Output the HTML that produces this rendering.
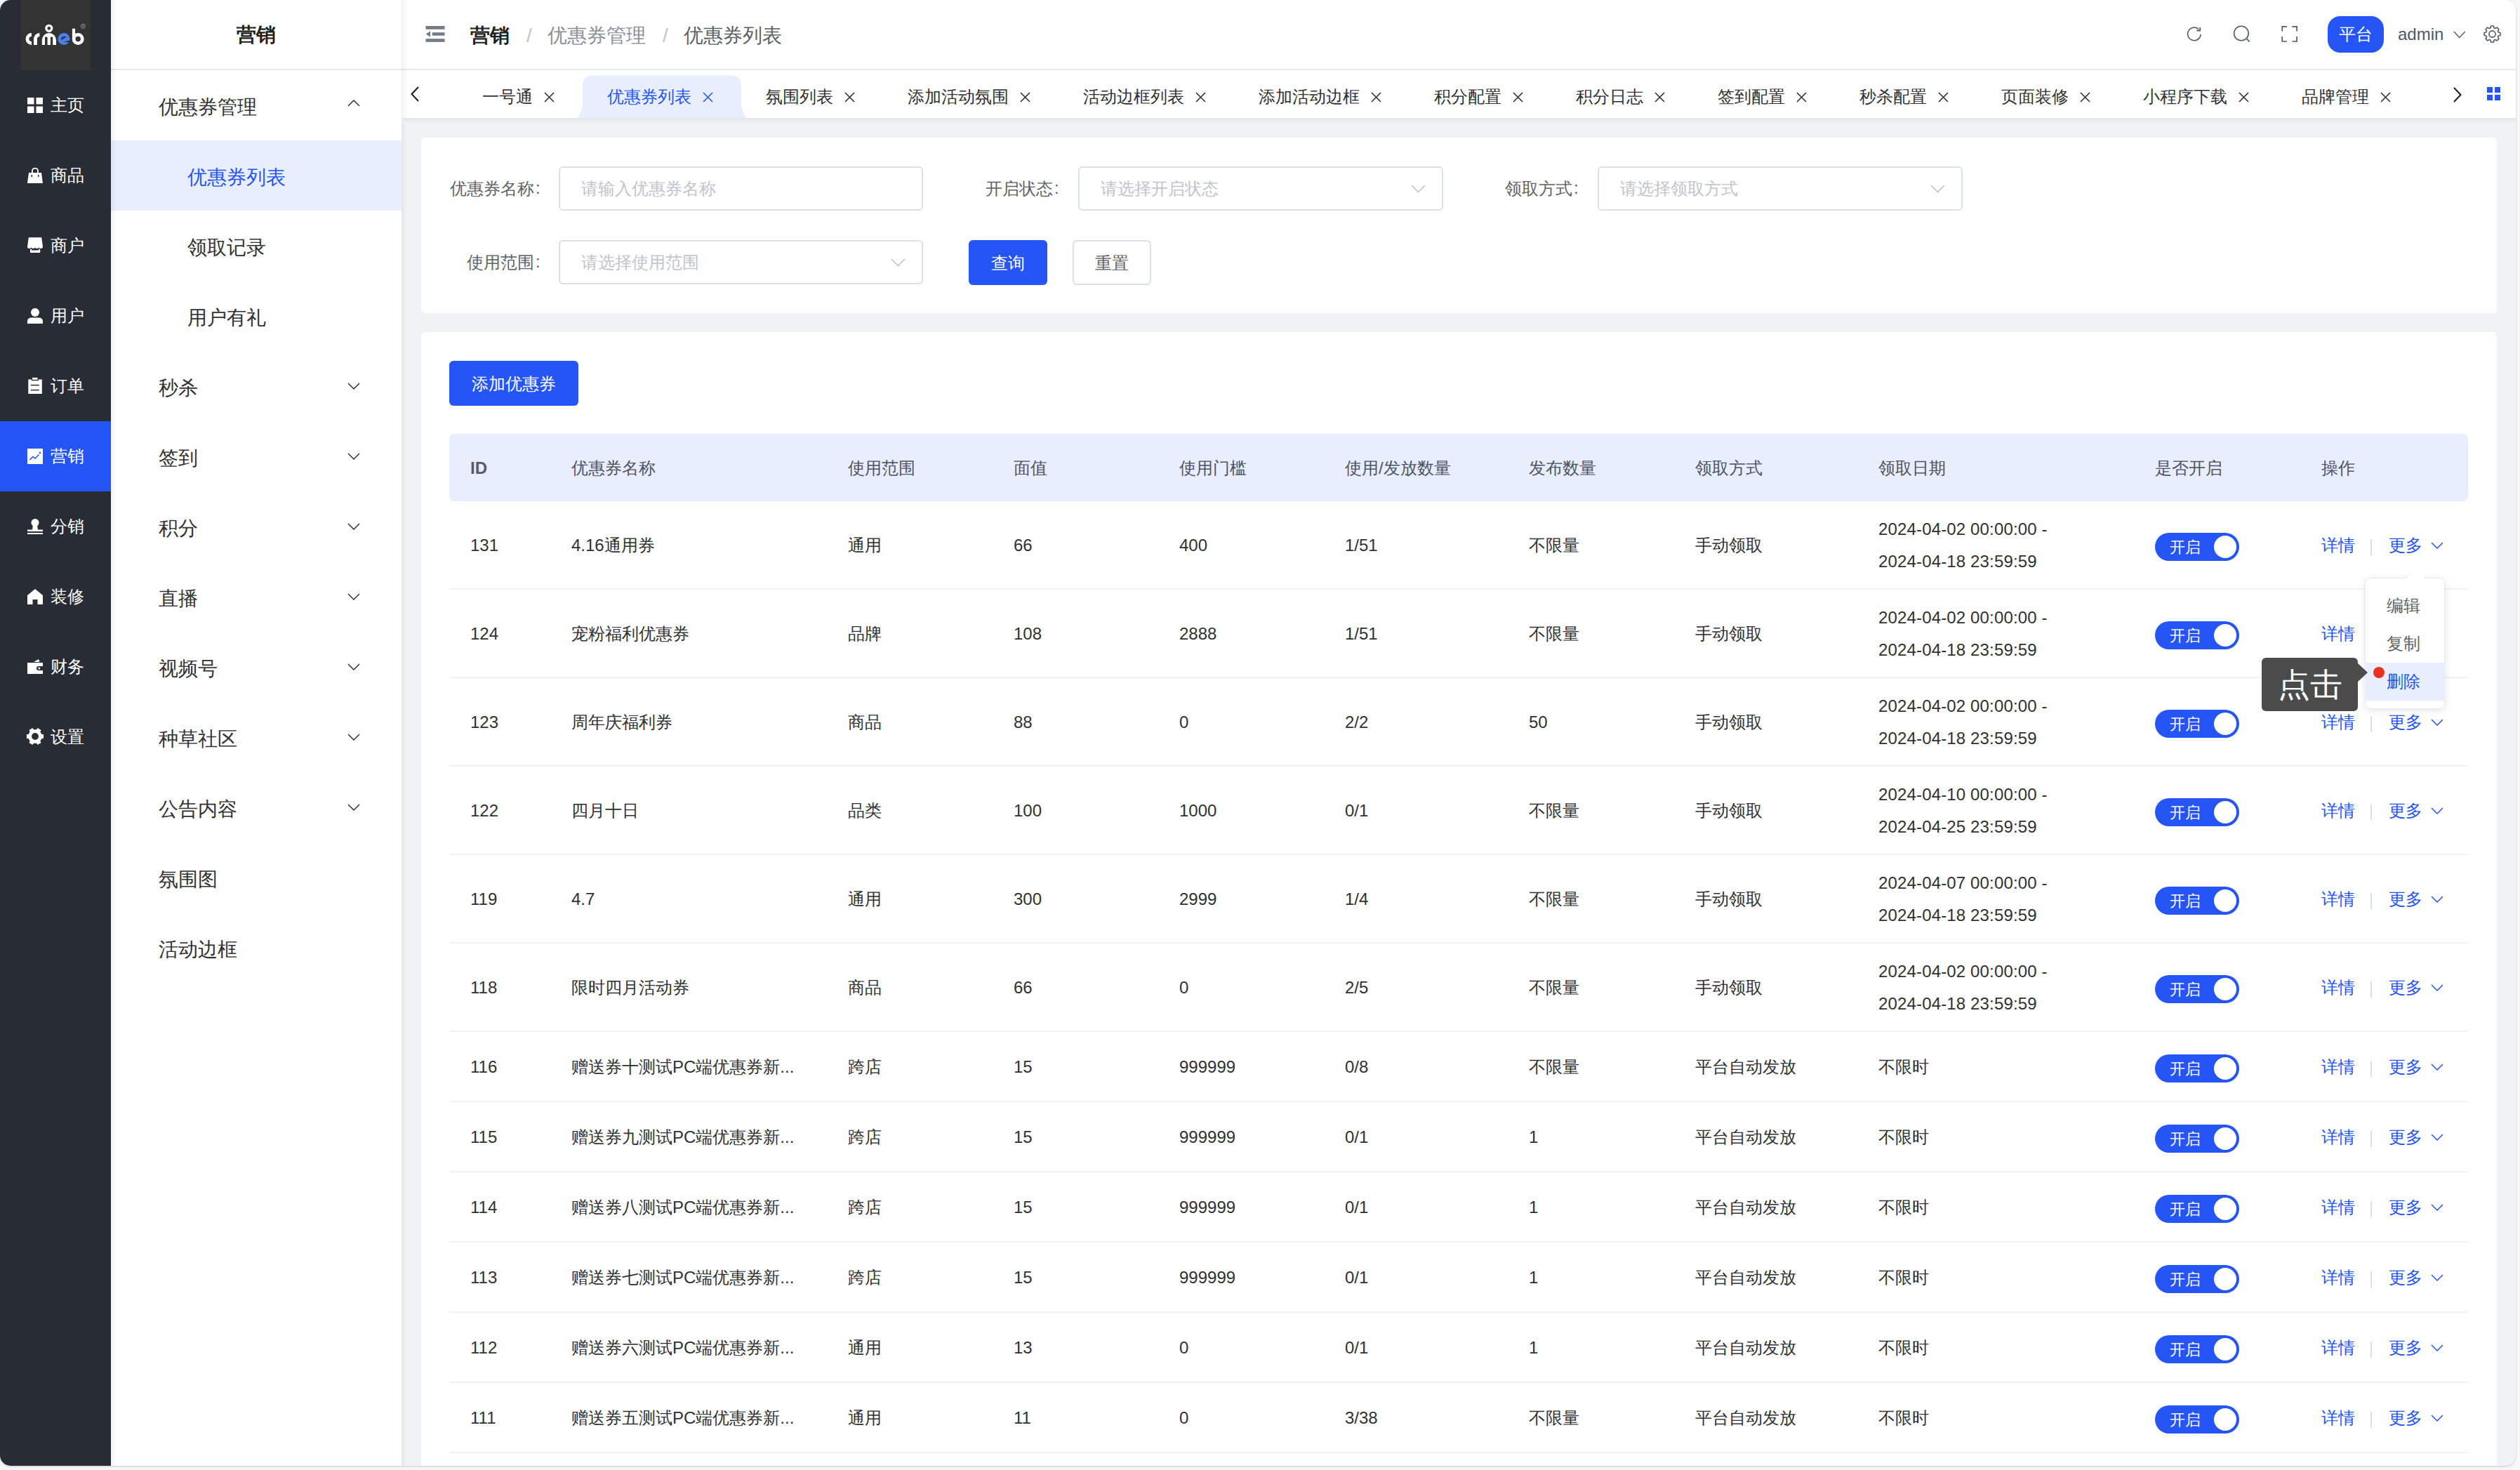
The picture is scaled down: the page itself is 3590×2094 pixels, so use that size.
<!DOCTYPE html>
<html><head><meta charset="utf-8"><title>优惠券列表</title>
<style>
*{box-sizing:border-box;margin:0;padding:0}
svg{display:block}
html,body{width:3590px;height:2094px;overflow:hidden;background:#f7f7f7;font-family:"Liberation Sans",sans-serif;color:#303133}
.abs{position:absolute}
.win{position:absolute;left:0;top:0;width:3584px;height:2088px;border-radius:15px;overflow:hidden;background:#f0f2f5;box-shadow:0 1px 3px rgba(0,0,0,.18)}
.s1{position:absolute;left:0;top:0;width:158px;height:2088px;background:#282c35}
.logo{position:absolute;left:29px;top:0;width:100px;height:100px;background:#333}
.mi{position:absolute;left:0;width:158px;height:100px;color:#fff;font-size:24px;line-height:100px}
.mi .ic{position:absolute;left:39px;top:39px;width:22px;height:22px}
.mi .ic svg{display:block}
.mi .tx{position:absolute;left:72px;top:0}
.mi.on{background:#2555f5}
.s2{position:absolute;left:158px;top:0;width:414px;height:2088px;background:#fff}
.s2 .ttl{position:absolute;left:0;top:1px;width:414px;height:98px;line-height:98px;text-align:center;font-size:28px;font-weight:bold;color:#1f1f1f}
.s2 .sep{position:absolute;left:0;top:98px;width:414px;height:2px;background:#e6e8ef}
.gi{position:absolute;left:0;width:414px;height:100px;line-height:100px;font-size:28px;color:#303133}
.gi .tx{position:absolute;left:68px;top:3px}
.gi .ar{position:absolute;left:337px;top:45px;width:18px;height:10px;color:#303133}
.gi .ar svg{display:block}
.si{position:absolute;left:0;width:414px;height:100px;line-height:100px;font-size:28px;color:#303133}
.si .tx{position:absolute;left:109px;top:3px}
.si.on{background:#e8eefd;color:#2555f5}
.hdr{position:absolute;left:572px;top:0;width:3012px;height:98px;background:#fff}
.hsep{position:absolute;left:572px;top:98px;width:3012px;height:2px;background:#e6e8ef}
.tabs{position:absolute;left:572px;top:100px;width:3012px;height:68px;background:#fff}
.tab{position:absolute;top:0;height:68px;font-size:24px;color:#303133;line-height:76px}
.tab .x{position:absolute;top:31px;width:15px;height:15px}
.tab .x svg{display:block}
.card{position:absolute;background:#fff;border-radius:6px}
.lbl{position:absolute;font-size:24px;color:#606266;line-height:34px}
.inp{position:absolute;height:63px;border:2px solid #dcdfe6;border-radius:6px;background:#fff;font-size:24px;color:#c0c4cc;line-height:59px;padding-left:30px}
.inp .ar{position:absolute;right:23px;top:24px;color:#c0c4cc}
.inp .ar svg{display:block}
.btn{position:absolute;height:64px;border-radius:6px;font-size:24px;line-height:66px;text-align:center}
.th{position:absolute;left:640px;top:618px;width:2876px;height:96px;background:#e8eefd;border-radius:7px}
.thc{position:absolute;top:1px;line-height:96px;font-size:24px;font-weight:500;color:#4d5466}
.tr{position:absolute;left:640px;width:2876px;border-bottom:2px solid #f1f2f4}
.td{position:absolute;font-size:24px;color:#303133;white-space:nowrap}
.sw{position:absolute;width:120px;height:40px;border-radius:20px;background:#2555f5}
.sw .k{position:absolute;left:84px;top:4px;width:32px;height:32px;border-radius:50%;background:#fff}
.sw .t{position:absolute;left:21px;top:1px;line-height:40px;font-size:22px;font-weight:500;color:#fff}
.op{position:absolute;font-size:24px;color:#2555f5;white-space:nowrap}
</style></head><body>
<div class="win">

<div class="s1">
<div class="logo"></div><svg class="abs" style="left:0;top:0" width="158" height="100" viewBox="0 0 158 100"><path d="M45 49.45 A6.05 6.05 0 0 0 45 61.55" fill="none" stroke="#fff" stroke-width="4.9"/><path d="M50.45 64 V55.5 A6 6 0 0 1 56.4 49.45" fill="none" stroke="#fff" stroke-width="4.9"/><path d="M59.8 64 V57.2 A10.1 10.1 0 0 1 80 57.2 V64 Z" fill="#fff"/><path d="M64 64 V53.6 Q64 52.4 65.8 52.4 Q67.6 52.4 67.6 53.6 V64 Z M71.9 64 V53.6 Q71.9 52.4 73.55 52.4 Q75.2 52.4 75.2 53.6 V64 Z" fill="#333"/><circle cx="69.8" cy="40.3" r="4" fill="none" stroke="#fff" stroke-width="3.2"/><circle cx="91" cy="55.5" r="8.5" fill="#4a80f0"/><path d="M87.1 57.2 Q86.6 52.3 91.5 52.1 L95.6 52.3 Z" fill="#333"/><path d="M89.5 59.8 L99.6 57.6 L99.6 60.2 Z" fill="#333"/><path d="M86.5 60 L96.5 51 L98.5 53 L88.5 62 Z" fill="#4a80f0"/><path d="M105 40.7 V56" stroke="#fff" stroke-width="4.2"/><circle cx="111.2" cy="55.5" r="6.1" fill="none" stroke="#fff" stroke-width="4.8" transform="translate(-0 0)"/><circle cx="118.3" cy="37.4" r="3.2" fill="none" stroke="#bbb" stroke-width="0.6"/><path d="M117.3 39.3 V35.6 H118.7 Q119.8 35.6 119.8 36.6 Q119.8 37.5 118.7 37.5 H117.3 M118.6 37.5 L119.9 39.3" fill="none" stroke="#bbb" stroke-width="0.5"/></svg>
<div class="mi" style="top:100px"><span class="ic"><svg width="22" height="22" viewBox="0 0 22 22"><rect x="0" y="0" width="9.5" height="9.5" fill="#fff"/><rect x="12.5" y="0" width="9.5" height="9.5" fill="#fff"/><rect x="0" y="12.5" width="9.5" height="9.5" fill="#fff"/><rect x="12.5" y="12.5" width="9.5" height="9.5" fill="#fff"/></svg></span><span class="tx">主页</span></div>
<div class="mi" style="top:200px"><span class="ic"><svg width="22" height="22" viewBox="0 0 22 22"><path d="M2 7 H20 L22 22 H0 Z" fill="#fff"/><path d="M7 7 V4.5 A4 4 0 0 1 15 4.5 V7" fill="none" stroke="#fff" stroke-width="1.8"/><rect x="5.5" y="10" width="1.6" height="3" fill="#282c35"/><rect x="14.9" y="10" width="1.6" height="3" fill="#282c35"/></svg></span><span class="tx">商品</span></div>
<div class="mi" style="top:300px"><span class="ic"><svg width="22" height="22" viewBox="0 0 22 22" style="overflow:visible"><path d="M1.8 -0.8 H20.2 L22 12.6 Q22 15 19.25 15 Q16.5 15 16.5 12.8 Q16.5 15 13.75 15 Q11 15 11 12.8 Q11 15 8.25 15 Q5.5 15 5.5 12.8 Q5.5 15 2.75 15 Q0 15 0 12.6 Z" fill="#fff"/><path fill="#fff" fill-rule="evenodd" d="M4 15.8 H18.2 V21 H4 Z M6 15.8 H16.2 V17.6 H6 Z"/></svg></span><span class="tx">商户</span></div>
<div class="mi" style="top:400px"><span class="ic"><svg width="22" height="22" viewBox="0 0 22 22"><circle cx="11" cy="6" r="6" fill="#fff"/><path d="M0 22 V19 Q0 13.5 6 13.5 H16 Q22 13.5 22 19 V22 Z" fill="#fff"/></svg></span><span class="tx">用户</span></div>
<div class="mi" style="top:500px"><span class="ic"><svg width="22" height="24" viewBox="0 0 22 24" style="overflow:visible"><rect x="7" y="-1.1" width="7.6" height="3" fill="#fff"/><path d="M1.3 1.6 H5.9 V3.2 H15.9 V1.6 H20.8 V22 H1.3 Z" fill="#fff"/><rect x="5" y="8.9" width="11.8" height="1.5" fill="#282c35"/><rect x="5" y="15.9" width="11.8" height="1.5" fill="#282c35"/></svg></span><span class="tx">订单</span></div>
<div class="mi on" style="top:600px"><span class="ic"><svg width="22" height="22" viewBox="0 0 22 22"><rect x="0" y="0" width="22" height="22" fill="#fff"/><path d="M3.5 16 L8 11.5 L11 14 L16.5 8.5" fill="none" stroke="#2555f5" stroke-width="1.6"/><circle cx="18" cy="6" r="1.3" fill="#2555f5"/></svg></span><span class="tx">营销</span></div>
<div class="mi" style="top:700px"><span class="ic"><svg width="22" height="22" viewBox="0 0 22 22"><circle cx="11" cy="5.5" r="5.5" fill="#fff"/><path d="M8 9 H14 L15 16 H7 Z" fill="#fff"/><rect x="0" y="15.5" width="22" height="2.5" fill="#fff"/><rect x="0" y="20" width="22" height="2" fill="#fff"/></svg></span><span class="tx">分销</span></div>
<div class="mi" style="top:800px"><span class="ic"><svg width="22" height="22" viewBox="0 0 22 22"><path d="M11 0 L22 9 V22 H14.5 V15 H7.5 V22 H0 V9 Z" fill="#fff"/></svg></span><span class="tx">装修</span></div>
<div class="mi" style="top:900px"><span class="ic"><svg width="22" height="22" viewBox="0 0 22 22" style="margin-top:-1px"><path d="M9 5 L16 1 L17.5 5 Z" fill="#fff"/><path d="M0 6 H22 V11 H16 A3 3 0 0 0 16 17 H22 V22 H0 Z" fill="#fff"/><circle cx="16.8" cy="14" r="1.5" fill="#fff"/></svg></span><span class="tx">财务</span></div>
<div class="mi" style="top:1000px"><span class="ic"><svg width="26" height="26" viewBox="0 0 26 26" style="margin:-3px 0 0 -2px"><path fill="#fff" fill-rule="evenodd" d="M22.43 9.98 L25.04 10.05 L25.04 15.95 L22.43 16.02 L20.33 19.65 L21.57 21.96 L16.47 24.90 L15.10 22.68 L10.90 22.68 L9.53 24.90 L4.43 21.96 L5.67 19.65 L3.57 16.02 L0.96 15.95 L0.96 10.05 L3.57 9.98 L5.67 6.35 L4.43 4.04 L9.53 1.10 L10.90 3.32 L15.10 3.32 L16.47 1.10 L21.57 4.04 L20.33 6.35 Z M13 8.1 A4.9 4.9 0 1 0 13 17.9 A4.9 4.9 0 1 0 13 8.1 Z"/></svg></span><span class="tx">设置</span></div>
</div>
<div class="s2"><div class="ttl">营销</div><div class="sep"></div>
<div class="gi" style="top:100px"><span class="tx">优惠券管理</span><span class="ar" style="top:42px"><svg width="18" height="10" viewBox="0 0 18 10"><path d="M1 9 L9 1 L17 9" fill="none" stroke="currentColor" stroke-width="1.5"/></svg></span></div>
<div class="si on" style="top:200px"><span class="tx">优惠券列表</span></div>
<div class="si" style="top:300px"><span class="tx">领取记录</span></div>
<div class="si" style="top:400px"><span class="tx">用户有礼</span></div>
<div class="gi" style="top:500px"><span class="tx">秒杀</span><span class="ar"><svg width="18" height="10" viewBox="0 0 18 10"><path d="M1 1 L9 9 L17 1" fill="none" stroke="currentColor" stroke-width="1.5"/></svg></span></div>
<div class="gi" style="top:600px"><span class="tx">签到</span><span class="ar"><svg width="18" height="10" viewBox="0 0 18 10"><path d="M1 1 L9 9 L17 1" fill="none" stroke="currentColor" stroke-width="1.5"/></svg></span></div>
<div class="gi" style="top:700px"><span class="tx">积分</span><span class="ar"><svg width="18" height="10" viewBox="0 0 18 10"><path d="M1 1 L9 9 L17 1" fill="none" stroke="currentColor" stroke-width="1.5"/></svg></span></div>
<div class="gi" style="top:800px"><span class="tx">直播</span><span class="ar"><svg width="18" height="10" viewBox="0 0 18 10"><path d="M1 1 L9 9 L17 1" fill="none" stroke="currentColor" stroke-width="1.5"/></svg></span></div>
<div class="gi" style="top:900px"><span class="tx">视频号</span><span class="ar"><svg width="18" height="10" viewBox="0 0 18 10"><path d="M1 1 L9 9 L17 1" fill="none" stroke="currentColor" stroke-width="1.5"/></svg></span></div>
<div class="gi" style="top:1000px"><span class="tx">种草社区</span><span class="ar"><svg width="18" height="10" viewBox="0 0 18 10"><path d="M1 1 L9 9 L17 1" fill="none" stroke="currentColor" stroke-width="1.5"/></svg></span></div>
<div class="gi" style="top:1100px"><span class="tx">公告内容</span><span class="ar"><svg width="18" height="10" viewBox="0 0 18 10"><path d="M1 1 L9 9 L17 1" fill="none" stroke="currentColor" stroke-width="1.5"/></svg></span></div>
<div class="gi" style="top:1200px"><span class="tx">氛围图</span></div>
<div class="gi" style="top:1300px"><span class="tx">活动边框</span></div>
</div>
<div class="abs" style="left:158px;top:0;width:8px;height:2088px;background:linear-gradient(90deg,rgba(0,0,0,.06),rgba(0,0,0,0))"></div>
<div class="hdr">
<svg class="abs" style="left:34px;top:37px" width="28" height="23" viewBox="0 0 28 23"><rect x="0.5" y="0" width="27" height="4.8" fill="#737a89"/><rect x="9.7" y="9.2" width="17.8" height="4.5" fill="#737a89"/><rect x="0.5" y="18.2" width="27" height="4.6" fill="#737a89"/><path d="M0.7 11.5 L7 7.2 V15.7 Z" fill="#737a89"/></svg>
<div class="abs" style="left:98px;top:2px;line-height:98px;font-size:28px;font-weight:bold;color:#1f1f1f">营销</div>
<div class="abs" style="left:178px;top:2px;line-height:98px;font-size:28px;color:#c0c4cc">/</div>
<div class="abs" style="left:208px;top:2px;line-height:98px;font-size:28px;color:#8a8f99">优惠券管理</div>
<div class="abs" style="left:372px;top:2px;line-height:98px;font-size:28px;color:#c0c4cc">/</div>
<div class="abs" style="left:402px;top:2px;line-height:98px;font-size:28px;color:#5c5f66">优惠券列表</div>
<svg class="abs" style="left:2541px;top:36px" width="26" height="26" viewBox="0 0 26 26"><path d="M22.14 12.88 A9.25 9.25 0 1 1 19.44 5.86" fill="none" stroke="#4f586b" stroke-width="1.6"/><path d="M16.3 7.7 H21.3 V2.9" fill="none" stroke="#4f586b" stroke-width="1.7"/></svg>
<svg class="abs" style="left:2608px;top:35px" width="27" height="27" viewBox="0 0 27 27"><circle cx="12.9" cy="12.5" r="10.3" fill="none" stroke="#4f586b" stroke-width="1.6"/><path d="M20.6 20.2 L24.6 24.4" stroke="#4f586b" stroke-width="1.7"/></svg>
<svg class="abs" style="left:2677px;top:36px" width="25" height="25" viewBox="0 0 25 25"><path d="M2.2 8.6 V1.9 H8.9 M16.4 1.9 H23.1 V8.6 M23.1 16.1 V23 H16.4 M8.9 23 H2.2 V16.1" fill="none" stroke="#4f586b" stroke-width="1.7"/></svg>
<div class="abs" style="left:2744px;top:23px;width:80px;height:52px;border-radius:18px;background:#2555f5;color:#fff;font-size:24px;line-height:52px;text-align:center">平台</div>
<div class="abs" style="left:2844px;top:0;line-height:98px;font-size:24px;color:#4f586b">admin</div>
<svg class="abs" style="left:2923px;top:44px" width="18" height="11" viewBox="0 0 18 11"><path d="M0.8 1 L8.8 9.5 L16.8 1" fill="none" stroke="#4f586b" stroke-width="1.4"/></svg>
<svg class="abs" style="left:2966px;top:36px" width="25" height="25" viewBox="0 0 25 25"><path fill="none" stroke="#4f586b" stroke-width="1.6" stroke-linejoin="round" d="M9.84 3.90 L10.65 1.05 L14.35 1.05 L15.16 3.90 L16.70 4.54 L19.29 3.10 L21.90 5.71 L20.46 8.30 L21.10 9.84 L23.95 10.65 L23.95 14.35 L21.10 15.16 L20.46 16.70 L21.90 19.29 L19.29 21.90 L16.70 20.46 L15.16 21.10 L14.35 23.95 L10.65 23.95 L9.84 21.10 L8.30 20.46 L5.71 21.90 L3.10 19.29 L4.54 16.70 L3.90 15.16 L1.05 14.35 L1.05 10.65 L3.90 9.84 L4.54 8.30 L3.10 5.71 L5.71 3.10 L8.30 4.54 Z"/><circle cx="12.5" cy="12.5" r="4.6" fill="none" stroke="#4f586b" stroke-width="1.6"/></svg>
</div><div class="hsep"></div>
<div class="tabs">
<svg class="abs" style="left:13px;top:23px" width="12" height="22" viewBox="0 0 12 22"><path d="M11 1 L1.5 11 L11 21" fill="none" stroke="#1a1a1a" stroke-width="2"/></svg>
<div class="tab" style="left:78px;width:178px;color:#303133"><span class="abs" style="left:37px;top:0">一号通</span><span class="x" style="left:125px"><svg width="15" height="15" viewBox="0 0 15 15"><path d="M1 1 L14 14 M14 1 L1 14" stroke="currentColor" stroke-width="1.6"/></svg></span></div>
<svg class="abs" style="left:250.5px;top:7px" width="240" height="61" viewBox="0 0 240 61"><path d="M0 61 Q5 53 7 44 V15 Q7 0.5 21 0.5 H219 Q233 0.5 233 15 V44 Q235 53 240 61 Z" fill="#e8eefd"/></svg>
<div class="tab" style="left:256px;width:226px;color:#2555f5"><span class="abs" style="left:37px;top:0">优惠券列表</span><span class="x" style="left:173px"><svg width="15" height="15" viewBox="0 0 15 15"><path d="M1 1 L14 14 M14 1 L1 14" stroke="currentColor" stroke-width="1.6"/></svg></span></div>
<div class="tab" style="left:482px;width:202px;color:#303133"><span class="abs" style="left:37px;top:0">氛围列表</span><span class="x" style="left:149px"><svg width="15" height="15" viewBox="0 0 15 15"><path d="M1 1 L14 14 M14 1 L1 14" stroke="currentColor" stroke-width="1.6"/></svg></span></div>
<div class="tab" style="left:684px;width:250px;color:#303133"><span class="abs" style="left:37px;top:0">添加活动氛围</span><span class="x" style="left:197px"><svg width="15" height="15" viewBox="0 0 15 15"><path d="M1 1 L14 14 M14 1 L1 14" stroke="currentColor" stroke-width="1.6"/></svg></span></div>
<div class="tab" style="left:934px;width:250px;color:#303133"><span class="abs" style="left:37px;top:0">活动边框列表</span><span class="x" style="left:197px"><svg width="15" height="15" viewBox="0 0 15 15"><path d="M1 1 L14 14 M14 1 L1 14" stroke="currentColor" stroke-width="1.6"/></svg></span></div>
<div class="tab" style="left:1184px;width:250px;color:#303133"><span class="abs" style="left:37px;top:0">添加活动边框</span><span class="x" style="left:197px"><svg width="15" height="15" viewBox="0 0 15 15"><path d="M1 1 L14 14 M14 1 L1 14" stroke="currentColor" stroke-width="1.6"/></svg></span></div>
<div class="tab" style="left:1434px;width:202px;color:#303133"><span class="abs" style="left:37px;top:0">积分配置</span><span class="x" style="left:149px"><svg width="15" height="15" viewBox="0 0 15 15"><path d="M1 1 L14 14 M14 1 L1 14" stroke="currentColor" stroke-width="1.6"/></svg></span></div>
<div class="tab" style="left:1636px;width:202px;color:#303133"><span class="abs" style="left:37px;top:0">积分日志</span><span class="x" style="left:149px"><svg width="15" height="15" viewBox="0 0 15 15"><path d="M1 1 L14 14 M14 1 L1 14" stroke="currentColor" stroke-width="1.6"/></svg></span></div>
<div class="tab" style="left:1838px;width:202px;color:#303133"><span class="abs" style="left:37px;top:0">签到配置</span><span class="x" style="left:149px"><svg width="15" height="15" viewBox="0 0 15 15"><path d="M1 1 L14 14 M14 1 L1 14" stroke="currentColor" stroke-width="1.6"/></svg></span></div>
<div class="tab" style="left:2040px;width:202px;color:#303133"><span class="abs" style="left:37px;top:0">秒杀配置</span><span class="x" style="left:149px"><svg width="15" height="15" viewBox="0 0 15 15"><path d="M1 1 L14 14 M14 1 L1 14" stroke="currentColor" stroke-width="1.6"/></svg></span></div>
<div class="tab" style="left:2242px;width:202px;color:#303133"><span class="abs" style="left:37px;top:0">页面装修</span><span class="x" style="left:149px"><svg width="15" height="15" viewBox="0 0 15 15"><path d="M1 1 L14 14 M14 1 L1 14" stroke="currentColor" stroke-width="1.6"/></svg></span></div>
<div class="tab" style="left:2444px;width:226px;color:#303133"><span class="abs" style="left:37px;top:0">小程序下载</span><span class="x" style="left:173px"><svg width="15" height="15" viewBox="0 0 15 15"><path d="M1 1 L14 14 M14 1 L1 14" stroke="currentColor" stroke-width="1.6"/></svg></span></div>
<div class="tab" style="left:2670px;width:202px;color:#303133"><span class="abs" style="left:37px;top:0">品牌管理</span><span class="x" style="left:149px"><svg width="15" height="15" viewBox="0 0 15 15"><path d="M1 1 L14 14 M14 1 L1 14" stroke="currentColor" stroke-width="1.6"/></svg></span></div>
<svg class="abs" style="left:2923px;top:23.5px" width="12" height="22" viewBox="0 0 12 22"><path d="M1 1 L10.5 11 L1 21" fill="none" stroke="#1a1a1a" stroke-width="2"/></svg>
<svg class="abs" style="left:2971px;top:24px" width="19" height="19" viewBox="0 0 19 19"><rect x="0" y="0" width="8" height="8" fill="#2555f5"/><rect x="11" y="0" width="8" height="8" fill="#2555f5"/><rect x="0" y="11" width="8" height="8" fill="#2555f5"/><rect x="11" y="11" width="8" height="8" fill="#2555f5"/></svg>
</div>
<div class="abs" style="left:572px;top:0;width:8px;height:2088px;background:linear-gradient(90deg,rgba(0,0,0,.05),rgba(0,0,0,0))"></div>
<div class="abs" style="left:572px;top:168px;width:3012px;height:8px;background:linear-gradient(#e6e8ec,#f0f2f5)"></div>
<div class="card" style="left:600px;top:196px;width:2957px;height:250px"></div>
<div class="lbl" style="left:641px;top:252px">优惠券名称<span style="position:absolute;left:122px;top:-1px">:</span></div>
<div class="inp" style="left:796px;top:237px;width:519px">请输入优惠券名称</div>
<div class="lbl" style="left:1404px;top:252px">开启状态<span style="position:absolute;left:98px;top:-1px">:</span></div>
<div class="inp" style="left:1536px;top:237px;width:520px">请选择开启状态<span class="ar"><svg width="21" height="12" viewBox="0 0 21 12"><path d="M1 1 L10.5 10.5 L20 1" fill="none" stroke="currentColor" stroke-width="1.6"/></svg></span></div>
<div class="lbl" style="left:2144px;top:252px">领取方式<span style="position:absolute;left:98px;top:-1px">:</span></div>
<div class="inp" style="left:2276px;top:237px;width:520px">请选择领取方式<span class="ar"><svg width="21" height="12" viewBox="0 0 21 12"><path d="M1 1 L10.5 10.5 L20 1" fill="none" stroke="currentColor" stroke-width="1.6"/></svg></span></div>
<div class="lbl" style="left:665px;top:357px">使用范围<span style="position:absolute;left:98px;top:-1px">:</span></div>
<div class="inp" style="left:796px;top:342px;width:519px">请选择使用范围<span class="ar"><svg width="21" height="12" viewBox="0 0 21 12"><path d="M1 1 L10.5 10.5 L20 1" fill="none" stroke="currentColor" stroke-width="1.6"/></svg></span></div>
<div class="btn" style="left:1380px;top:342px;width:112px;background:#2555f5;color:#fff">查询</div>
<div class="btn" style="left:1528px;top:342px;width:112px;border:2px solid #dcdfe6;line-height:62px;color:#606266;background:#fff">重置</div>
<div class="card" style="left:600px;top:473px;width:2957px;height:1700px"></div>
<div class="btn" style="left:640px;top:514px;width:184px;background:#2555f5;color:#fff">添加优惠券</div>
<div class="th">
<span class="thc" style="left:30px;font-weight:bold;color:#545b6c">ID</span>
<span class="thc" style="left:174px">优惠券名称</span>
<span class="thc" style="left:568px">使用范围</span>
<span class="thc" style="left:804px">面值</span>
<span class="thc" style="left:1040px">使用门槛</span>
<span class="thc" style="left:1276px">使用/发放数量</span>
<span class="thc" style="left:1538px">发布数量</span>
<span class="thc" style="left:1775px">领取方式</span>
<span class="thc" style="left:2036px">领取日期</span>
<span class="thc" style="left:2430px">是否开启</span>
<span class="thc" style="left:2667px">操作</span>
</div>
<div class="tr" style="top:714.0px;height:126.0px"></div>
<div class="td" style="left:670px;top:760.0px;line-height:34px">131</div>
<div class="td" style="left:814px;top:760.0px;line-height:34px">4.16通用券</div>
<div class="td" style="left:1208px;top:760.0px;line-height:34px">通用</div>
<div class="td" style="left:1444px;top:760.0px;line-height:34px">66</div>
<div class="td" style="left:1680px;top:760.0px;line-height:34px">400</div>
<div class="td" style="left:1916px;top:760.0px;line-height:34px">1/51</div>
<div class="td" style="left:2178px;top:760.0px;line-height:34px">不限量</div>
<div class="td" style="left:2415px;top:760.0px;line-height:34px">手动领取</div>
<div class="td" style="left:2676px;top:731.0px;line-height:46px;letter-spacing:0.15px">2024-04-02 00:00:00 -<br>2024-04-18 23:59:59</div>
<div class="sw" style="left:3070px;top:759.0px"><span class="t">开启</span><span class="k"></span></div>
<div class="op" style="left:3307px;top:760.0px;line-height:34px">详情</div>
<div class="abs" style="left:3377px;top:768.0px;width:2px;height:23px;background:#dcdfe6"></div>
<div class="op" style="left:3403px;top:760.0px;line-height:34px">更多</div>
<div class="abs" style="left:3463px;top:772.0px;color:#2555f5;width:18px;height:10px"><svg width="18" height="10" viewBox="0 0 18 10"><path d="M1 1 L9 9 L17 1" fill="none" stroke="currentColor" stroke-width="1.5"/></svg></div>
<div class="tr" style="top:840.0px;height:126.0px"></div>
<div class="td" style="left:670px;top:886.0px;line-height:34px">124</div>
<div class="td" style="left:814px;top:886.0px;line-height:34px">宠粉福利优惠券</div>
<div class="td" style="left:1208px;top:886.0px;line-height:34px">品牌</div>
<div class="td" style="left:1444px;top:886.0px;line-height:34px">108</div>
<div class="td" style="left:1680px;top:886.0px;line-height:34px">2888</div>
<div class="td" style="left:1916px;top:886.0px;line-height:34px">1/51</div>
<div class="td" style="left:2178px;top:886.0px;line-height:34px">不限量</div>
<div class="td" style="left:2415px;top:886.0px;line-height:34px">手动领取</div>
<div class="td" style="left:2676px;top:857.0px;line-height:46px;letter-spacing:0.15px">2024-04-02 00:00:00 -<br>2024-04-18 23:59:59</div>
<div class="sw" style="left:3070px;top:885.0px"><span class="t">开启</span><span class="k"></span></div>
<div class="op" style="left:3307px;top:886.0px;line-height:34px">详情</div>
<div class="abs" style="left:3377px;top:894.0px;width:2px;height:23px;background:#dcdfe6"></div>
<div class="op" style="left:3403px;top:886.0px;line-height:34px">更多</div>
<div class="abs" style="left:3463px;top:898.0px;color:#2555f5;width:18px;height:10px"><svg width="18" height="10" viewBox="0 0 18 10"><path d="M1 1 L9 9 L17 1" fill="none" stroke="currentColor" stroke-width="1.5"/></svg></div>
<div class="tr" style="top:966.0px;height:126.0px"></div>
<div class="td" style="left:670px;top:1012.0px;line-height:34px">123</div>
<div class="td" style="left:814px;top:1012.0px;line-height:34px">周年庆福利券</div>
<div class="td" style="left:1208px;top:1012.0px;line-height:34px">商品</div>
<div class="td" style="left:1444px;top:1012.0px;line-height:34px">88</div>
<div class="td" style="left:1680px;top:1012.0px;line-height:34px">0</div>
<div class="td" style="left:1916px;top:1012.0px;line-height:34px">2/2</div>
<div class="td" style="left:2178px;top:1012.0px;line-height:34px">50</div>
<div class="td" style="left:2415px;top:1012.0px;line-height:34px">手动领取</div>
<div class="td" style="left:2676px;top:983.0px;line-height:46px;letter-spacing:0.15px">2024-04-02 00:00:00 -<br>2024-04-18 23:59:59</div>
<div class="sw" style="left:3070px;top:1011.0px"><span class="t">开启</span><span class="k"></span></div>
<div class="op" style="left:3307px;top:1012.0px;line-height:34px">详情</div>
<div class="abs" style="left:3377px;top:1020.0px;width:2px;height:23px;background:#dcdfe6"></div>
<div class="op" style="left:3403px;top:1012.0px;line-height:34px">更多</div>
<div class="abs" style="left:3463px;top:1024.0px;color:#2555f5;width:18px;height:10px"><svg width="18" height="10" viewBox="0 0 18 10"><path d="M1 1 L9 9 L17 1" fill="none" stroke="currentColor" stroke-width="1.5"/></svg></div>
<div class="tr" style="top:1092.0px;height:126.0px"></div>
<div class="td" style="left:670px;top:1138.0px;line-height:34px">122</div>
<div class="td" style="left:814px;top:1138.0px;line-height:34px">四月十日</div>
<div class="td" style="left:1208px;top:1138.0px;line-height:34px">品类</div>
<div class="td" style="left:1444px;top:1138.0px;line-height:34px">100</div>
<div class="td" style="left:1680px;top:1138.0px;line-height:34px">1000</div>
<div class="td" style="left:1916px;top:1138.0px;line-height:34px">0/1</div>
<div class="td" style="left:2178px;top:1138.0px;line-height:34px">不限量</div>
<div class="td" style="left:2415px;top:1138.0px;line-height:34px">手动领取</div>
<div class="td" style="left:2676px;top:1109.0px;line-height:46px;letter-spacing:0.15px">2024-04-10 00:00:00 -<br>2024-04-25 23:59:59</div>
<div class="sw" style="left:3070px;top:1137.0px"><span class="t">开启</span><span class="k"></span></div>
<div class="op" style="left:3307px;top:1138.0px;line-height:34px">详情</div>
<div class="abs" style="left:3377px;top:1146.0px;width:2px;height:23px;background:#dcdfe6"></div>
<div class="op" style="left:3403px;top:1138.0px;line-height:34px">更多</div>
<div class="abs" style="left:3463px;top:1150.0px;color:#2555f5;width:18px;height:10px"><svg width="18" height="10" viewBox="0 0 18 10"><path d="M1 1 L9 9 L17 1" fill="none" stroke="currentColor" stroke-width="1.5"/></svg></div>
<div class="tr" style="top:1218.0px;height:126.0px"></div>
<div class="td" style="left:670px;top:1264.0px;line-height:34px">119</div>
<div class="td" style="left:814px;top:1264.0px;line-height:34px">4.7</div>
<div class="td" style="left:1208px;top:1264.0px;line-height:34px">通用</div>
<div class="td" style="left:1444px;top:1264.0px;line-height:34px">300</div>
<div class="td" style="left:1680px;top:1264.0px;line-height:34px">2999</div>
<div class="td" style="left:1916px;top:1264.0px;line-height:34px">1/4</div>
<div class="td" style="left:2178px;top:1264.0px;line-height:34px">不限量</div>
<div class="td" style="left:2415px;top:1264.0px;line-height:34px">手动领取</div>
<div class="td" style="left:2676px;top:1235.0px;line-height:46px;letter-spacing:0.15px">2024-04-07 00:00:00 -<br>2024-04-18 23:59:59</div>
<div class="sw" style="left:3070px;top:1263.0px"><span class="t">开启</span><span class="k"></span></div>
<div class="op" style="left:3307px;top:1264.0px;line-height:34px">详情</div>
<div class="abs" style="left:3377px;top:1272.0px;width:2px;height:23px;background:#dcdfe6"></div>
<div class="op" style="left:3403px;top:1264.0px;line-height:34px">更多</div>
<div class="abs" style="left:3463px;top:1276.0px;color:#2555f5;width:18px;height:10px"><svg width="18" height="10" viewBox="0 0 18 10"><path d="M1 1 L9 9 L17 1" fill="none" stroke="currentColor" stroke-width="1.5"/></svg></div>
<div class="tr" style="top:1344.0px;height:126.0px"></div>
<div class="td" style="left:670px;top:1390.0px;line-height:34px">118</div>
<div class="td" style="left:814px;top:1390.0px;line-height:34px">限时四月活动券</div>
<div class="td" style="left:1208px;top:1390.0px;line-height:34px">商品</div>
<div class="td" style="left:1444px;top:1390.0px;line-height:34px">66</div>
<div class="td" style="left:1680px;top:1390.0px;line-height:34px">0</div>
<div class="td" style="left:1916px;top:1390.0px;line-height:34px">2/5</div>
<div class="td" style="left:2178px;top:1390.0px;line-height:34px">不限量</div>
<div class="td" style="left:2415px;top:1390.0px;line-height:34px">手动领取</div>
<div class="td" style="left:2676px;top:1361.0px;line-height:46px;letter-spacing:0.15px">2024-04-02 00:00:00 -<br>2024-04-18 23:59:59</div>
<div class="sw" style="left:3070px;top:1389.0px"><span class="t">开启</span><span class="k"></span></div>
<div class="op" style="left:3307px;top:1390.0px;line-height:34px">详情</div>
<div class="abs" style="left:3377px;top:1398.0px;width:2px;height:23px;background:#dcdfe6"></div>
<div class="op" style="left:3403px;top:1390.0px;line-height:34px">更多</div>
<div class="abs" style="left:3463px;top:1402.0px;color:#2555f5;width:18px;height:10px"><svg width="18" height="10" viewBox="0 0 18 10"><path d="M1 1 L9 9 L17 1" fill="none" stroke="currentColor" stroke-width="1.5"/></svg></div>
<div class="tr" style="top:1470.0px;height:100.0px"></div>
<div class="td" style="left:670px;top:1503.0px;line-height:34px">116</div>
<div class="td" style="left:814px;top:1503.0px;line-height:34px">赠送券十测试PC端优惠券新...</div>
<div class="td" style="left:1208px;top:1503.0px;line-height:34px">跨店</div>
<div class="td" style="left:1444px;top:1503.0px;line-height:34px">15</div>
<div class="td" style="left:1680px;top:1503.0px;line-height:34px">999999</div>
<div class="td" style="left:1916px;top:1503.0px;line-height:34px">0/8</div>
<div class="td" style="left:2178px;top:1503.0px;line-height:34px">不限量</div>
<div class="td" style="left:2415px;top:1503.0px;line-height:34px">平台自动发放</div>
<div class="td" style="left:2676px;top:1503.0px;line-height:34px">不限时</div>
<div class="sw" style="left:3070px;top:1502.0px"><span class="t">开启</span><span class="k"></span></div>
<div class="op" style="left:3307px;top:1503.0px;line-height:34px">详情</div>
<div class="abs" style="left:3377px;top:1511.0px;width:2px;height:23px;background:#dcdfe6"></div>
<div class="op" style="left:3403px;top:1503.0px;line-height:34px">更多</div>
<div class="abs" style="left:3463px;top:1515.0px;color:#2555f5;width:18px;height:10px"><svg width="18" height="10" viewBox="0 0 18 10"><path d="M1 1 L9 9 L17 1" fill="none" stroke="currentColor" stroke-width="1.5"/></svg></div>
<div class="tr" style="top:1570.0px;height:100.0px"></div>
<div class="td" style="left:670px;top:1603.0px;line-height:34px">115</div>
<div class="td" style="left:814px;top:1603.0px;line-height:34px">赠送券九测试PC端优惠券新...</div>
<div class="td" style="left:1208px;top:1603.0px;line-height:34px">跨店</div>
<div class="td" style="left:1444px;top:1603.0px;line-height:34px">15</div>
<div class="td" style="left:1680px;top:1603.0px;line-height:34px">999999</div>
<div class="td" style="left:1916px;top:1603.0px;line-height:34px">0/1</div>
<div class="td" style="left:2178px;top:1603.0px;line-height:34px">1</div>
<div class="td" style="left:2415px;top:1603.0px;line-height:34px">平台自动发放</div>
<div class="td" style="left:2676px;top:1603.0px;line-height:34px">不限时</div>
<div class="sw" style="left:3070px;top:1602.0px"><span class="t">开启</span><span class="k"></span></div>
<div class="op" style="left:3307px;top:1603.0px;line-height:34px">详情</div>
<div class="abs" style="left:3377px;top:1611.0px;width:2px;height:23px;background:#dcdfe6"></div>
<div class="op" style="left:3403px;top:1603.0px;line-height:34px">更多</div>
<div class="abs" style="left:3463px;top:1615.0px;color:#2555f5;width:18px;height:10px"><svg width="18" height="10" viewBox="0 0 18 10"><path d="M1 1 L9 9 L17 1" fill="none" stroke="currentColor" stroke-width="1.5"/></svg></div>
<div class="tr" style="top:1670.0px;height:100.0px"></div>
<div class="td" style="left:670px;top:1703.0px;line-height:34px">114</div>
<div class="td" style="left:814px;top:1703.0px;line-height:34px">赠送券八测试PC端优惠券新...</div>
<div class="td" style="left:1208px;top:1703.0px;line-height:34px">跨店</div>
<div class="td" style="left:1444px;top:1703.0px;line-height:34px">15</div>
<div class="td" style="left:1680px;top:1703.0px;line-height:34px">999999</div>
<div class="td" style="left:1916px;top:1703.0px;line-height:34px">0/1</div>
<div class="td" style="left:2178px;top:1703.0px;line-height:34px">1</div>
<div class="td" style="left:2415px;top:1703.0px;line-height:34px">平台自动发放</div>
<div class="td" style="left:2676px;top:1703.0px;line-height:34px">不限时</div>
<div class="sw" style="left:3070px;top:1702.0px"><span class="t">开启</span><span class="k"></span></div>
<div class="op" style="left:3307px;top:1703.0px;line-height:34px">详情</div>
<div class="abs" style="left:3377px;top:1711.0px;width:2px;height:23px;background:#dcdfe6"></div>
<div class="op" style="left:3403px;top:1703.0px;line-height:34px">更多</div>
<div class="abs" style="left:3463px;top:1715.0px;color:#2555f5;width:18px;height:10px"><svg width="18" height="10" viewBox="0 0 18 10"><path d="M1 1 L9 9 L17 1" fill="none" stroke="currentColor" stroke-width="1.5"/></svg></div>
<div class="tr" style="top:1770.0px;height:100.0px"></div>
<div class="td" style="left:670px;top:1803.0px;line-height:34px">113</div>
<div class="td" style="left:814px;top:1803.0px;line-height:34px">赠送券七测试PC端优惠券新...</div>
<div class="td" style="left:1208px;top:1803.0px;line-height:34px">跨店</div>
<div class="td" style="left:1444px;top:1803.0px;line-height:34px">15</div>
<div class="td" style="left:1680px;top:1803.0px;line-height:34px">999999</div>
<div class="td" style="left:1916px;top:1803.0px;line-height:34px">0/1</div>
<div class="td" style="left:2178px;top:1803.0px;line-height:34px">1</div>
<div class="td" style="left:2415px;top:1803.0px;line-height:34px">平台自动发放</div>
<div class="td" style="left:2676px;top:1803.0px;line-height:34px">不限时</div>
<div class="sw" style="left:3070px;top:1802.0px"><span class="t">开启</span><span class="k"></span></div>
<div class="op" style="left:3307px;top:1803.0px;line-height:34px">详情</div>
<div class="abs" style="left:3377px;top:1811.0px;width:2px;height:23px;background:#dcdfe6"></div>
<div class="op" style="left:3403px;top:1803.0px;line-height:34px">更多</div>
<div class="abs" style="left:3463px;top:1815.0px;color:#2555f5;width:18px;height:10px"><svg width="18" height="10" viewBox="0 0 18 10"><path d="M1 1 L9 9 L17 1" fill="none" stroke="currentColor" stroke-width="1.5"/></svg></div>
<div class="tr" style="top:1870.0px;height:100.0px"></div>
<div class="td" style="left:670px;top:1903.0px;line-height:34px">112</div>
<div class="td" style="left:814px;top:1903.0px;line-height:34px">赠送券六测试PC端优惠券新...</div>
<div class="td" style="left:1208px;top:1903.0px;line-height:34px">通用</div>
<div class="td" style="left:1444px;top:1903.0px;line-height:34px">13</div>
<div class="td" style="left:1680px;top:1903.0px;line-height:34px">0</div>
<div class="td" style="left:1916px;top:1903.0px;line-height:34px">0/1</div>
<div class="td" style="left:2178px;top:1903.0px;line-height:34px">1</div>
<div class="td" style="left:2415px;top:1903.0px;line-height:34px">平台自动发放</div>
<div class="td" style="left:2676px;top:1903.0px;line-height:34px">不限时</div>
<div class="sw" style="left:3070px;top:1902.0px"><span class="t">开启</span><span class="k"></span></div>
<div class="op" style="left:3307px;top:1903.0px;line-height:34px">详情</div>
<div class="abs" style="left:3377px;top:1911.0px;width:2px;height:23px;background:#dcdfe6"></div>
<div class="op" style="left:3403px;top:1903.0px;line-height:34px">更多</div>
<div class="abs" style="left:3463px;top:1915.0px;color:#2555f5;width:18px;height:10px"><svg width="18" height="10" viewBox="0 0 18 10"><path d="M1 1 L9 9 L17 1" fill="none" stroke="currentColor" stroke-width="1.5"/></svg></div>
<div class="tr" style="top:1970.0px;height:100.0px"></div>
<div class="td" style="left:670px;top:2003.0px;line-height:34px">111</div>
<div class="td" style="left:814px;top:2003.0px;line-height:34px">赠送券五测试PC端优惠券新...</div>
<div class="td" style="left:1208px;top:2003.0px;line-height:34px">通用</div>
<div class="td" style="left:1444px;top:2003.0px;line-height:34px">11</div>
<div class="td" style="left:1680px;top:2003.0px;line-height:34px">0</div>
<div class="td" style="left:1916px;top:2003.0px;line-height:34px">3/38</div>
<div class="td" style="left:2178px;top:2003.0px;line-height:34px">不限量</div>
<div class="td" style="left:2415px;top:2003.0px;line-height:34px">平台自动发放</div>
<div class="td" style="left:2676px;top:2003.0px;line-height:34px">不限时</div>
<div class="sw" style="left:3070px;top:2002.0px"><span class="t">开启</span><span class="k"></span></div>
<div class="op" style="left:3307px;top:2003.0px;line-height:34px">详情</div>
<div class="abs" style="left:3377px;top:2011.0px;width:2px;height:23px;background:#dcdfe6"></div>
<div class="op" style="left:3403px;top:2003.0px;line-height:34px">更多</div>
<div class="abs" style="left:3463px;top:2015.0px;color:#2555f5;width:18px;height:10px"><svg width="18" height="10" viewBox="0 0 18 10"><path d="M1 1 L9 9 L17 1" fill="none" stroke="currentColor" stroke-width="1.5"/></svg></div>
<div class="abs" style="left:3369px;top:823px;width:114px;height:187px;background:#fff;border:1px solid #e8eaf0;border-radius:8px;box-shadow:0 2px 12px rgba(0,0,0,.10)"></div>
<svg class="abs" style="left:3429px;top:812px" width="26" height="13" viewBox="0 0 26 13"><path d="M0 12 L13 0 L26 12" fill="#fff"/></svg>
<div class="abs" style="left:3369px;top:944px;width:114px;height:54px;background:#e8eefd"></div>
<div class="abs" style="left:3400px;top:846px;font-size:24px;line-height:34px;color:#606266">编辑</div>
<div class="abs" style="left:3400px;top:900px;font-size:24px;line-height:34px;color:#606266">复制</div>
<div class="abs" style="left:3400px;top:954px;font-size:24px;line-height:34px;color:#2555f5">删除</div>
<div class="abs" style="left:3222px;top:937px;width:137px;height:76px;background:#4b4b4b;border-radius:6px;color:#fff;font-size:46px;line-height:76px;text-align:center">点击</div>
<svg class="abs" style="left:3358px;top:944px" width="16" height="28" viewBox="0 0 16 28"><path d="M0 0 L15 14 L0 28 Z" fill="#4b4b4b"/></svg>
<div class="abs" style="left:3381px;top:950px;width:16px;height:16px;border-radius:50%;background:#e8321f"></div>
</div></body></html>
